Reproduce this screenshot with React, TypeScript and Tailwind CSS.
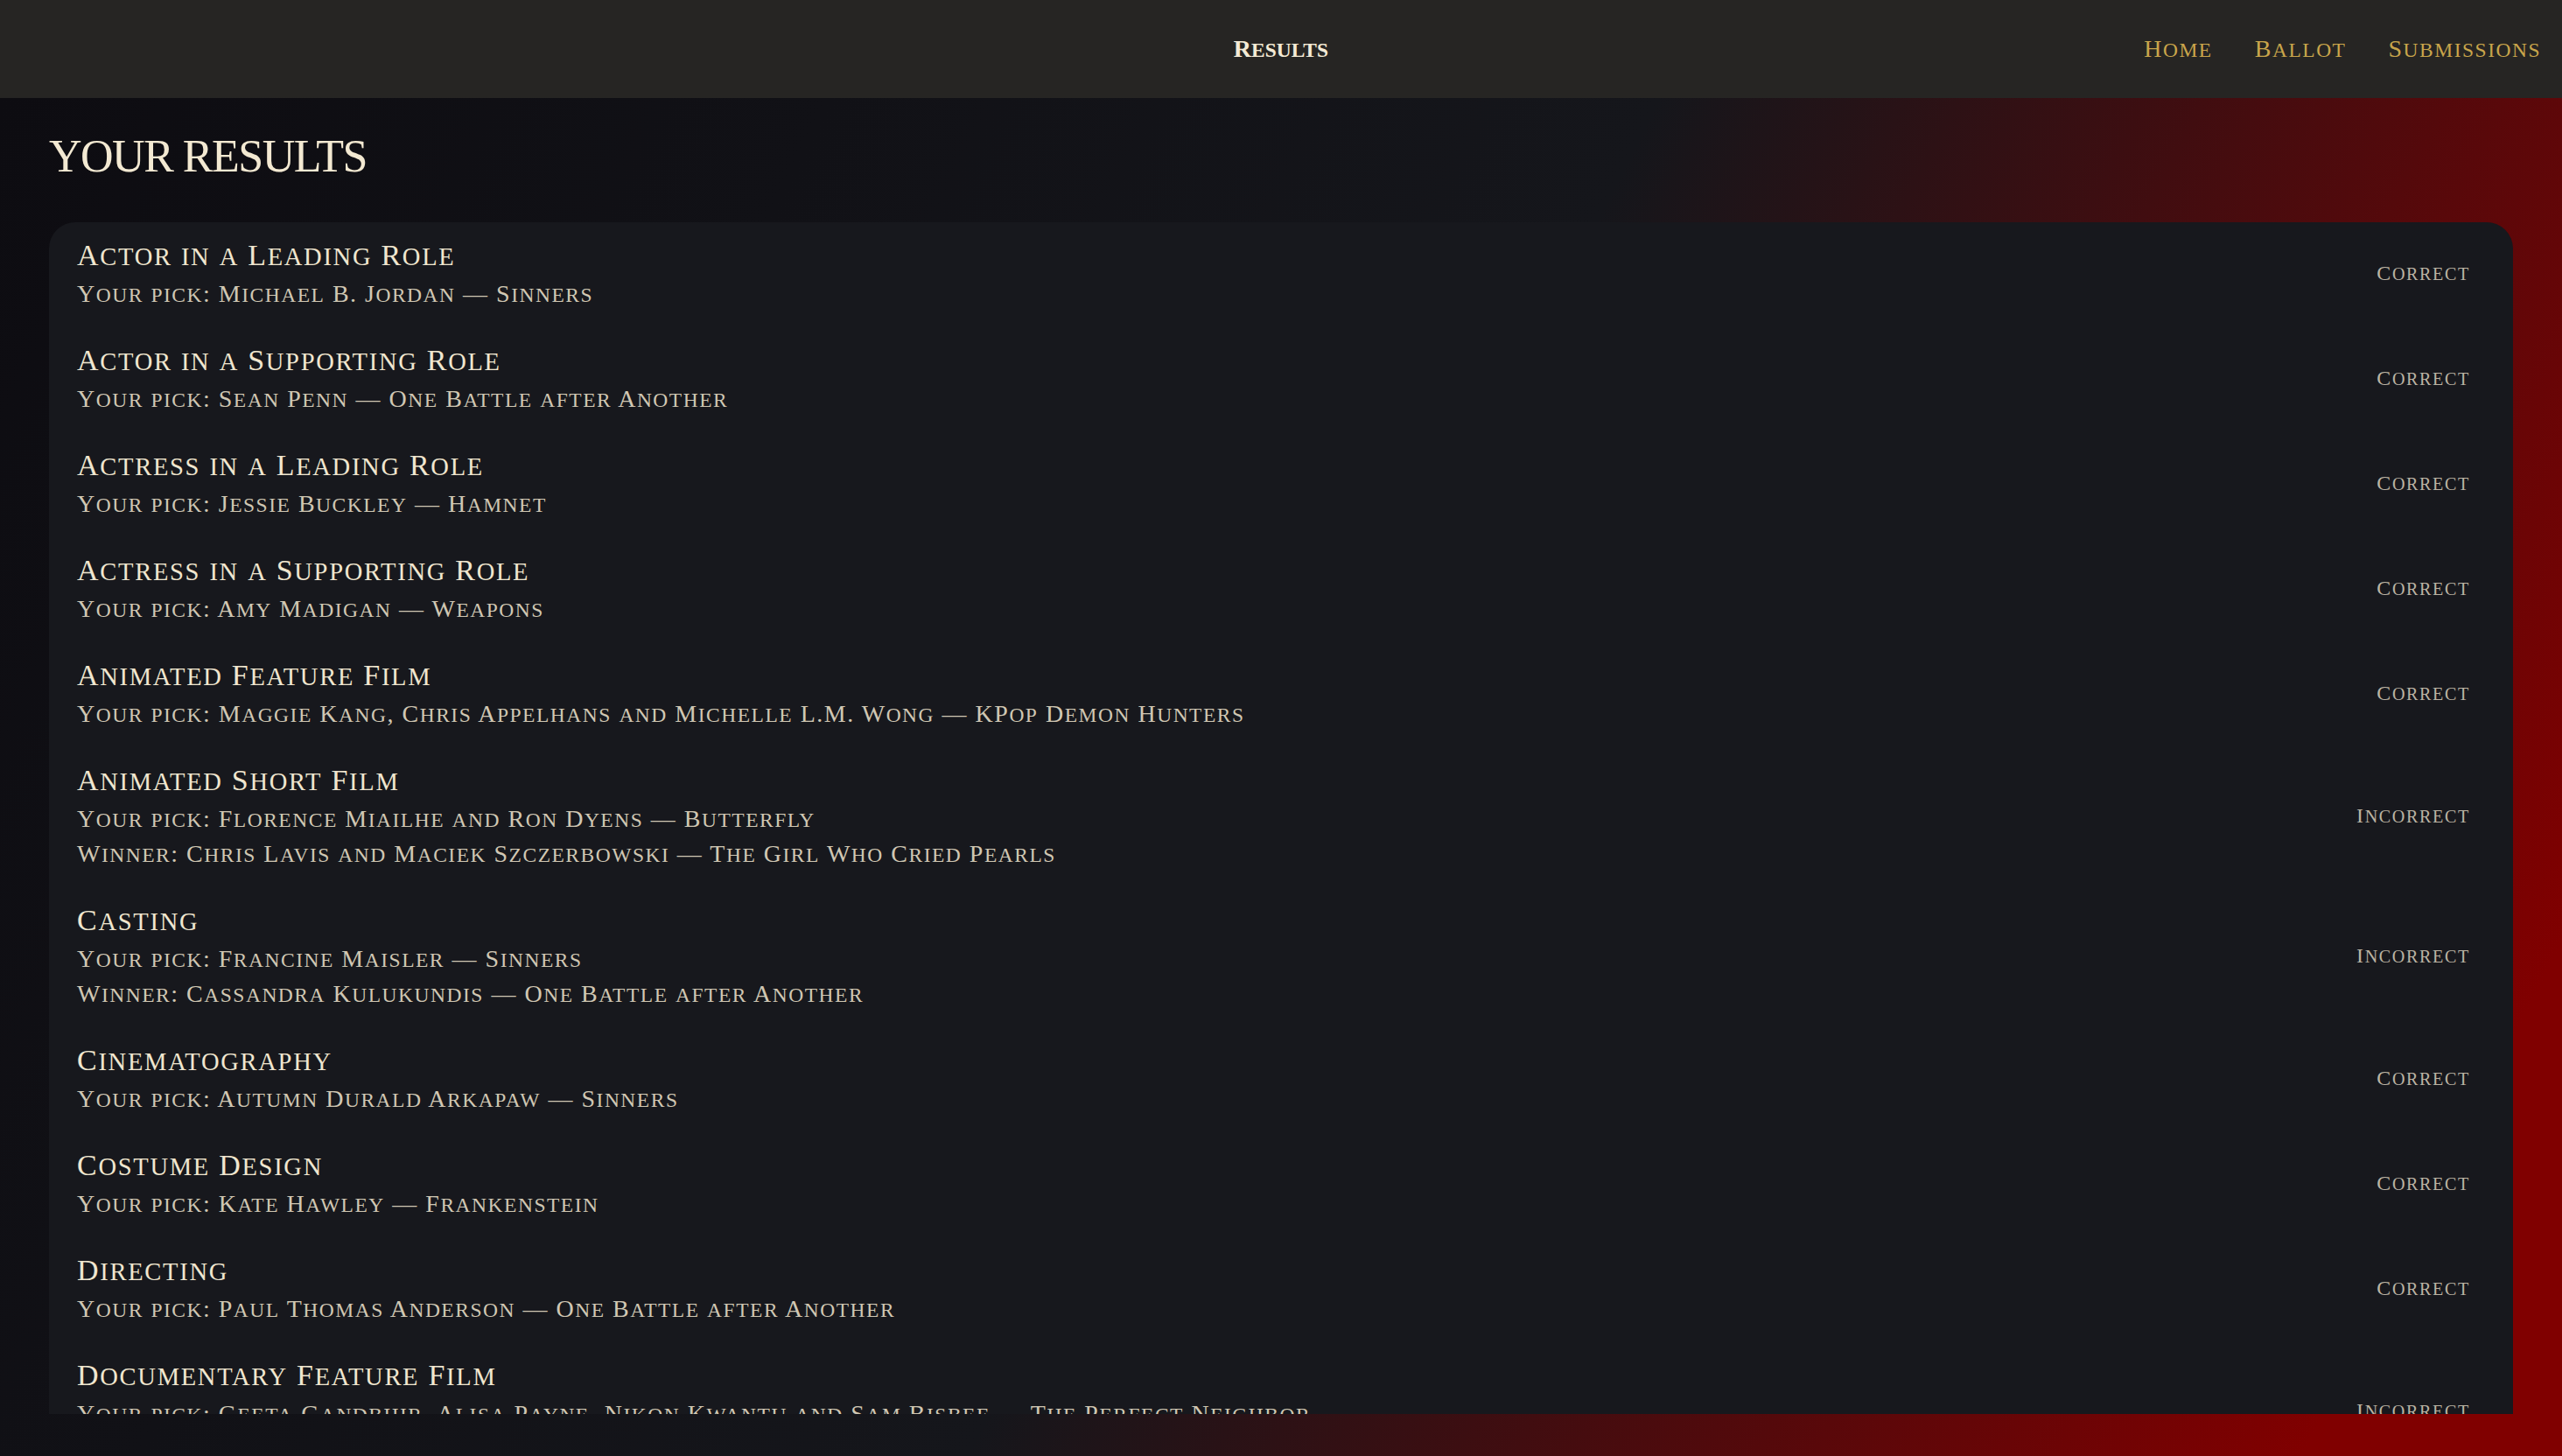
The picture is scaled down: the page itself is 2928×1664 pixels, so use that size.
import React from "react";

type Result = {
  category: string;
  pick: string;
  winner?: string;
  correct: boolean;
};

const results: Result[] = [
  { category: "Actor in a Leading Role", pick: "Michael B. Jordan — Sinners", correct: true },
  { category: "Actor in a Supporting Role", pick: "Sean Penn — One Battle after Another", correct: true },
  { category: "Actress in a Leading Role", pick: "Jessie Buckley — Hamnet", correct: true },
  { category: "Actress in a Supporting Role", pick: "Amy Madigan — Weapons", correct: true },
  {
    category: "Animated Feature Film",
    pick: "Maggie Kang, Chris Appelhans and Michelle L.M. Wong — KPop Demon Hunters",
    correct: true,
  },
  {
    category: "Animated Short Film",
    pick: "Florence Miailhe and Ron Dyens — Butterfly",
    winner: "Chris Lavis and Maciek Szczerbowski — The Girl Who Cried Pearls",
    correct: false,
  },
  {
    category: "Casting",
    pick: "Francine Maisler — Sinners",
    winner: "Cassandra Kulukundis — One Battle after Another",
    correct: false,
  },
  { category: "Cinematography", pick: "Autumn Durald Arkapaw — Sinners", correct: true },
  { category: "Costume Design", pick: "Kate Hawley — Frankenstein", correct: true },
  { category: "Directing", pick: "Paul Thomas Anderson — One Battle after Another", correct: true },
  {
    category: "Documentary Feature Film",
    pick: "Geeta Gandbhir, Alisa Payne, Nikon Kwantu and Sam Bisbee — The Perfect Neighbor",
    winner: "—",
    correct: false,
  },
];

// lowercase runs are shown as slightly smaller capitals, like a titling small-caps face
function Caps({ text }: { text: string }) {
  const parts = text.split(/([a-z]+)/);
  return (
    <>
      {parts.map((p, i) =>
        /^[a-z]+$/.test(p) ? (
          <span key={i} className="text-[0.84em] leading-none uppercase">
            {p}
          </span>
        ) : (
          <React.Fragment key={i}>{p}</React.Fragment>
        )
      )}
    </>
  );
}

export default function App() {
  return (
    <div className="flex h-screen flex-col overflow-hidden font-['Liberation_Serif',serif]">
      {/* Top bar */}
      <header className="grid h-[112px] shrink-0 grid-cols-3 items-center bg-[#262523]">
        <div />
        <div className="text-center text-[28px] font-bold text-[#f4ebd6]">
          <Caps text="Results" />
        </div>
        <nav className="flex items-center justify-end gap-[48px] pr-[24px] text-[28px] tracking-[1.5px] text-[#c9a54b]">
          <a>
            <Caps text="Home" />
          </a>
          <a>
            <Caps text="Ballot" />
          </a>
          <a>
            <Caps text="Submissions" />
          </a>
        </nav>
      </header>

      <main className="flex min-h-0 flex-1 flex-col bg-[linear-gradient(117deg,#0d0c11_0%,#15161b_51%,#800000_92%)] px-[56px] pt-[36px] pb-[48px]">
        <h1 className="mb-[44px] text-[52px] leading-[62px] tracking-[-1.5px] text-[#f3e9d2] uppercase">
          Your Results
        </h1>

        {/* Results list */}
        <div className="min-h-0 flex-1 overflow-hidden rounded-t-[30px] bg-[#17181d]">
          {results.map((r) => (
            <div
              key={r.category}
              className="flex items-center justify-between pt-[14px] pr-[49px] pb-[18px] pl-[32px]"
            >
              <div>
                <div className="text-[34px] leading-[48px] tracking-[1.7px] text-[#f0e6cf]">
                  <Caps text={r.category} />
                </div>
                <div className="text-[28px] leading-[40px] tracking-[1.5px] text-[#d0c7b3]">
                  <Caps text={`Your pick: ${r.pick}`} />
                </div>
                {r.winner && (
                  <div className="text-[28px] leading-[40px] tracking-[1.5px] text-[#d0c7b3]">
                    <Caps text={`Winner: ${r.winner}`} />
                  </div>
                )}
              </div>
              <div className="text-[24px] tracking-[1.6px] text-[#bbb3a3]">
                <Caps text={r.correct ? "Correct" : "Incorrect"} />
              </div>
            </div>
          ))}
        </div>
      </main>
    </div>
  );
}
